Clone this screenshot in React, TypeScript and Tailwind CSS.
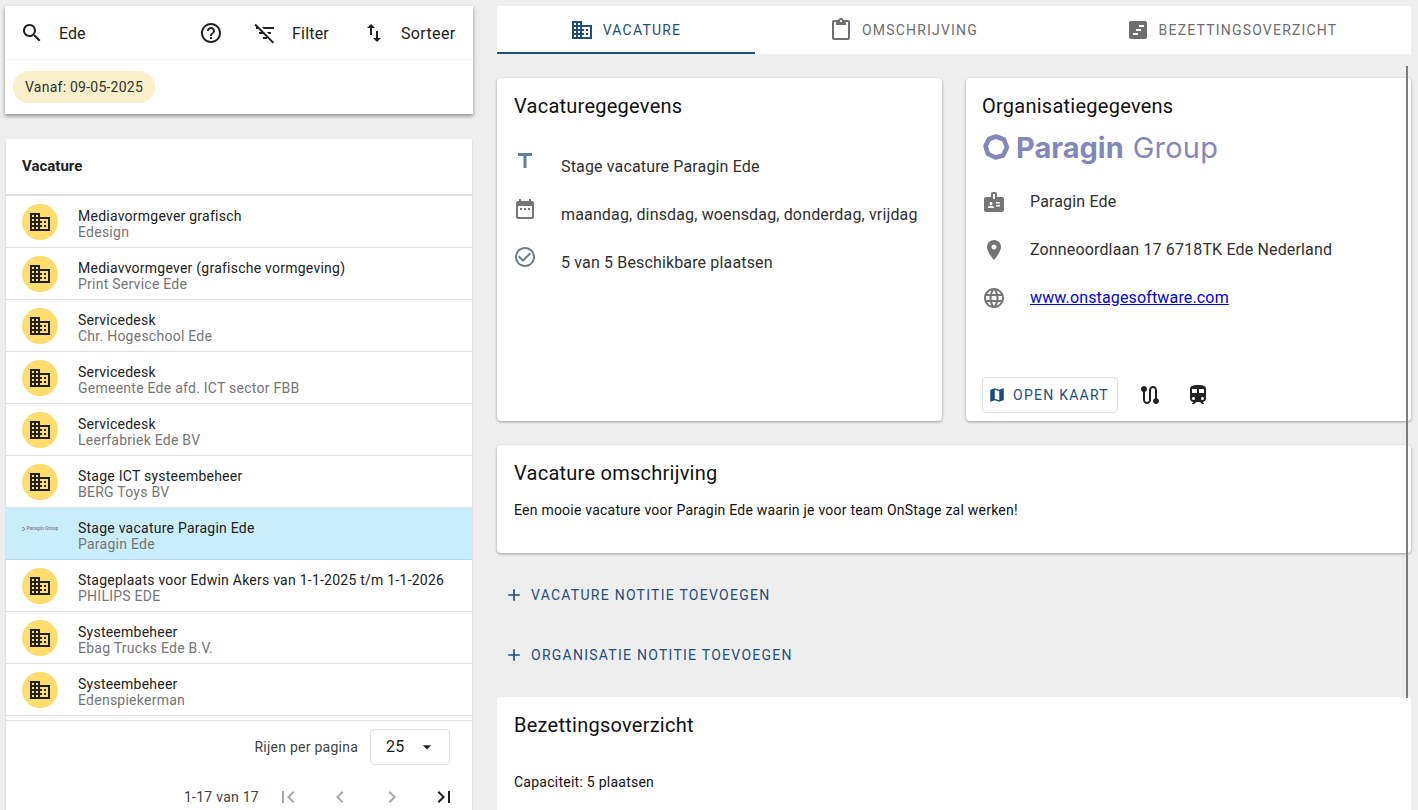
import React from "react";

const paths = {
  search: "M15.5 14h-.79l-.28-.27C15.41 12.59 16 11.11 16 9.5 16 5.91 13.09 3 9.5 3S3 5.91 3 9.5 5.91 16 9.5 16c1.61 0 3.09-.59 4.23-1.57l.27.28v.79l5 4.99L20.49 19l-4.99-5zm-6 0C7.01 14 5 11.99 5 9.5S7.01 5 9.5 5 14 7.01 14 9.5 11.99 14 9.5 14z",
  help: "M11 18h2v-2h-2v2zm1-16C6.48 2 2 6.48 2 12s4.48 10 10 10 10-4.48 10-10S17.52 2 12 2zm0 18c-4.41 0-8-3.59-8-8s3.59-8 8-8 8 3.59 8 8-3.59 8-8 8zm0-14c-2.21 0-4 1.79-4 4h2c0-1.1.9-2 2-2s2 .9 2 2c0 2-3 1.75-3 5h2c0-2.25 3-2.5 3-5 0-2.21-1.79-4-4-4z",
  filterOff: "M10.83 8H21V6H8.83l2 2zm5 5H18v-2h-4.17l2 2zM14 16.83V18h-4v-2h3.17l-3-3H6v-2h2.17l-3-3H3V6h.17L1.39 4.22 2.8 2.81l18.38 18.38-1.41 1.41L14 16.83z",
  swap: "M16 17.01V10h-2v7.01h-3L15 21l4-3.99h-3zM9 3L5 6.99h3V14h2V6.99h3L9 3z",
  domain: "M12 7V3H2v18h20V7H12zM6 19H4v-2h2v2zm0-4H4v-2h2v2zm0-4H4V9h2v2zm0-4H4V5h2v2zm4 12H8v-2h2v2zm0-4H8v-2h2v2zm0-4H8V9h2v2zm0-4H8V5h2v2zm10 12h-8v-2h2v-2h-2v-2h2v-2h-2V9h8v10zm-2-8h-2v2h2v-2zm0 4h-2v2h2v-2z",
  paste: "M19 2h-4.18C14.4.84 13.3 0 12 0c-1.3 0-2.4.84-2.82 2H5c-1.1 0-2 .9-2 2v16c0 1.1.9 2 2 2h14c1.1 0 2-.9 2-2V4c0-1.1-.9-2-2-2zm-7 0c.55 0 1 .45 1 1s-.45 1-1 1-1-.45-1-1 .45-1 1-1zm7 18H5V4h2v3h10V4h2v16z",
  title: "M5 4v3h5.5v12h3V7H19V4z",
  calendar: "M19 4h-1V2h-2v2H8V2H6v2H5c-1.11 0-1.99.9-1.99 2L3 20c0 1.1.89 2 2 2h14c1.1 0 2-.9 2-2V6c0-1.1-.9-2-2-2zm0 16H5V9h14v11zM9 11H7v2h2v-2zm4 0h-2v2h2v-2zm4 0h-2v2h2v-2z",
  check: "M16.59 7.58L10 14.17l-3.59-3.58L5 12l5 5 8-8zM12 2C6.48 2 2 6.48 2 12s4.48 10 10 10 10-4.48 10-10S17.52 2 12 2zm0 18c-4.42 0-8-3.58-8-8s3.58-8 8-8 8 3.58 8 8-3.58 8-8 8z",
  badge: "M20 7h-5V4c0-1.1-.9-2-2-2h-2c-1.1 0-2 .9-2 2v3H4c-1.1 0-2 .9-2 2v11c0 1.1.9 2 2 2h16c1.1 0 2-.9 2-2V9c0-1.1-.9-2-2-2zM9 12c.83 0 1.5.67 1.5 1.5S9.83 15 9 15s-1.5-.67-1.5-1.5S8.17 12 9 12zm3 6H6v-.75c0-1 2-1.5 3-1.5s3 .5 3 1.5V18zm1-9h-2V4h2v5zm5 7.5h-4V15h4v1.5zm0-3h-4V12h4v1.5z",
  place: "M12 2C8.13 2 5 5.13 5 9c0 5.25 7 13 7 13s7-7.75 7-13c0-3.87-3.13-7-7-7zm0 9.5c-1.38 0-2.5-1.12-2.5-2.5s1.12-2.5 2.5-2.5 2.5 1.12 2.5 2.5-1.12 2.5-2.5 2.5z",
  web: "M11.99 2C6.47 2 2 6.48 2 12s4.47 10 9.99 10C17.52 22 22 17.52 22 12S17.52 2 11.99 2zm6.93 6h-2.95c-.32-1.25-.78-2.45-1.38-3.56 1.84.63 3.37 1.91 4.33 3.56zM12 4.04c.83 1.2 1.48 2.53 1.91 3.96h-3.82c.43-1.43 1.08-2.76 1.91-3.96zM4.26 14C4.1 13.36 4 12.69 4 12s.1-1.36.26-2h3.38c-.08.66-.14 1.32-.14 2 0 .68.06 1.34.14 2H4.26zm.82 2h2.95c.32 1.25.78 2.45 1.38 3.56-1.84-.63-3.37-1.9-4.33-3.56zm2.95-8H5.08c.96-1.66 2.49-2.93 4.33-3.56C8.81 5.55 8.35 6.75 8.03 8zM12 19.96c-.83-1.2-1.48-2.53-1.91-3.96h3.82c-.43 1.43-1.08 2.76-1.91 3.96zM14.34 14H9.66c-.09-.66-.16-1.32-.16-2 0-.68.07-1.35.16-2h4.68c.09.65.16 1.32.16 2 0 .68-.07 1.34-.16 2zm.25 5.56c.6-1.11 1.06-2.31 1.38-3.56h2.95c-.96 1.65-2.49 2.93-4.33 3.56zM16.36 14c.08-.66.14-1.32.14-2 0-.68-.06-1.34-.14-2h3.38c.16.64.26 1.31.26 2s-.1 1.36-.26 2h-3.38z",
  map: "M20.5 3l-.16.03L15 5.1 9 3 3.36 4.9c-.21.07-.36.25-.36.48V20.5c0 .28.22.5.5.5l.16-.03L9 18.9l6 2.1 5.64-1.9c.21-.07.36-.25.36-.48V3.5c0-.28-.22-.5-.5-.5zM15 19l-6-2.11V5l6 2.11V19z",
  route: "M19 15.18V7c0-2.21-1.79-4-4-4s-4 1.79-4 4v10c0 1.1-.9 2-2 2s-2-.9-2-2V8.82C8.16 8.4 9 7.3 9 6c0-1.66-1.34-3-3-3S3 4.34 3 6c0 1.3.84 2.4 2 2.82V17c0 2.21 1.79 4 4 4s4-1.79 4-4V7c0-1.1.9-2 2-2s2 .9 2 2v8.18c-1.16.41-2 1.51-2 2.82 0 1.66 1.34 3 3 3s3-1.34 3-3c0-1.3-.84-2.4-2-2.82z",
  train: "M12 2c-4 0-8 .5-8 4v9.5C4 17.43 5.57 19 7.5 19L6 20.5v.5h2.23l2-2H14l2 2h2v-.5L16.5 19c1.93 0 3.5-1.57 3.5-3.5V6c0-3.5-3.58-4-8-4zM7.5 17c-.83 0-1.5-.67-1.5-1.5S6.67 14 7.5 14s1.5.67 1.5 1.5S8.33 17 7.5 17zm3.5-7H6V6h5v4zm2 0V6h5v4h-5zm3.5 7c-.83 0-1.5-.67-1.5-1.5s.67-1.5 1.5-1.5 1.5.67 1.5 1.5-.67 1.5-1.5 1.5z",
  add: "M19 13h-6v6h-2v-6H5v-2h6V5h2v6h6v2z",
  first: "M18.41 16.59L13.82 12l4.59-4.59L17 6l-6 6 6 6zM6 6h2v12H6z",
  prev: "M15.41 7.41L14 6l-6 6 6 6 1.41-1.41L10.83 12z",
  next: "M10 6L8.59 7.41 13.17 12l-4.58 4.59L10 18l6-6z",
  last: "M5.59 7.41L10.18 12l-4.59 4.59L7 18l6-6-6-6zM16 6h2v12h-2z",
  drop: "M7 10l5 5 5-5z",
  chart: "M19 3H5c-1.1 0-2 .9-2 2v14c0 1.1.9 2 2 2h14c1.1 0 2-.9 2-2V5c0-1.1-.9-2-2-2zM7 17v-2h5v2H7zm3-4v-2h5v2h-5zm3-4V7h5v2h-5z",
};

function Icon({ d, className }: { d: string; className?: string }) {
  return (
    <svg viewBox="0 0 24 24" fill="currentColor" className={`shrink-0 ${className ?? ""}`}>
      <path d={d} />
    </svg>
  );
}

function ParaginLogo() {
  return (
    <div className="mt-[9px] flex h-[32px] items-center font-['Inter',sans-serif] text-[#8387b9]">
      <svg viewBox="0 0 28 28" className="h-[28px] w-[28px] shrink-0">
        <path
          d="M14 3.5 L22 6.5 L25 14.5 L21 22.5 L13.5 24.5 L6 21 L3.5 13 L7 6 Z"
          fill="none"
          stroke="currentColor"
          strokeWidth="4.6"
          strokeLinejoin="round"
        />
      </svg>
      <span className="ml-[6px] text-[29px] leading-none font-bold">Paragin</span>
      <span className="ml-[9px] text-[29px] leading-none font-normal tracking-[0.2px]">Group</span>
    </div>
  );
}

const rows = [
  ["Mediavormgever grafisch", "Edesign"],
  ["Mediavvormgever (grafische vormgeving)", "Print Service Ede"],
  ["Servicedesk", "Chr. Hogeschool Ede"],
  ["Servicedesk", "Gemeente Ede afd. ICT sector FBB"],
  ["Servicedesk", "Leerfabriek Ede BV"],
  ["Stage ICT systeembeheer", "BERG Toys BV"],
  ["Stage vacature Paragin Ede", "Paragin Ede"],
  ["Stageplaats voor Edwin Akers van 1-1-2025 t/m 1-1-2026", "PHILIPS EDE"],
  ["Systeembeheer", "Ebag Trucks Ede B.V."],
  ["Systeembeheer", "Edenspiekerman"],
];

function Row({ title, sub }: { title: string; sub: string }) {
  const selected = title === "Stage vacature Paragin Ede";
  return (
    <div
      className={`flex h-[52px] items-center border-b pl-[16px] ${
        selected ? "border-[#b5dbe9] bg-[#c9eefb]" : "border-[#e0e0e0]"
      }`}
    >
      {selected ? (
        <div className="mb-[10px] flex h-[36px] w-[36px] items-center justify-center overflow-hidden text-[#8a8da8]">
          <svg viewBox="0 0 4 4" className="mr-[1px] h-[4px] w-[4px] shrink-0">
            <circle cx="2" cy="2" r="1.5" fill="none" stroke="currentColor" />
          </svg>
          <span className="text-[5px] leading-none font-bold whitespace-nowrap">Paragin Group</span>
        </div>
      ) : (
        <div className="flex h-[36px] w-[36px] items-center justify-center rounded-full bg-[#ffdd6e] text-[#212121]">
          <Icon d={paths.domain} className="h-[24px] w-[24px]" />
        </div>
      )}
      <div className="ml-[20px] pt-[5px]">
        <div className="text-[14px] leading-[16px] tracking-[0.24px] text-[#212121]">{title}</div>
        <div className="text-[14px] leading-[16px] tracking-[0.25px] text-[#757575]">{sub}</div>
      </div>
    </div>
  );
}

function LeftColumn() {
  return (
    <div className="flex w-[468px] shrink-0 flex-col pt-[6px]">
      <div className="h-[108px] bg-white shadow-[0_2px_4px_rgba(0,0,0,0.4)]">
        <div className="flex h-[54px] items-center border-b border-[#f6f6f6] text-[16px] text-[#212121]">
          <Icon d={paths.search} className="ml-[15px] h-[24px] w-[24px]" />
          <span className="ml-[15px] w-[140px] pt-[3px]">Ede</span>
          <Icon d={paths.help} className="h-[24px] w-[24px]" />
          <Icon d={paths.filterOff} className="ml-[30px] h-[24px] w-[24px]" />
          <span className="ml-[15px] w-[38px] pt-[2px] tracking-[0.2px]">Filter</span>
          <Icon d={paths.swap} className="ml-[32px] h-[24px] w-[24px]" />
          <span className="ml-[15px] pt-[2px] tracking-[0.35px]">Sorteer</span>
        </div>
        <div className="pt-[11px] pl-[8px]">
          <span className="inline-flex h-[32px] items-center rounded-full bg-[#f8f0c9] px-[12px] text-[14px] tracking-[0.24px] text-[#303030]">
            Vanaf: 09-05-2025
          </span>
        </div>
      </div>

      <div className="mx-[1px] mt-[25px] flex min-h-0 flex-1 flex-col bg-white shadow-[0_1px_2px_rgba(0,0,0,0.15)]">
        <div className="flex h-[57px] shrink-0 items-center border-b-2 border-[#e0e0e0] pl-[16px] text-[15px] font-bold text-[#212121]">
          Vacature
        </div>
        <div className="h-[524px] shrink-0 overflow-hidden">
          {rows.map((r, i) => (
            <Row key={i} title={r[0]} sub={r[1]} />
          ))}
        </div>
        <div className="flex-1 border-t border-[#e0e0e0] text-[14px] tracking-[0.25px] text-[#424242]">
          <div className="mt-[8px] flex items-center justify-end pr-[22px]">
            <span className="mr-[12px]">Rijen per pagina</span>
            <div className="flex h-[36px] w-[80px] items-center rounded-[4px] border border-[#e0e0e0] pl-[15px] text-[16px] text-[#212121]">
              25
              <Icon d={paths.drop} className="ml-[13px] h-[20px] w-[20px]" />
            </div>
          </div>
          <div className="mt-[20px] flex items-center pl-[178px]">
            <span className="w-[92px]">1-17 van 17</span>
            <Icon d={paths.first} className="h-[24px] w-[24px] text-[#a8a8a8]" />
            <Icon d={paths.prev} className="ml-[28px] h-[24px] w-[24px] text-[#a8a8a8]" />
            <Icon d={paths.next} className="ml-[28px] h-[24px] w-[24px] text-[#a8a8a8]" />
            <Icon d={paths.last} className="ml-[28px] h-[24px] w-[24px] text-[#212121]" />
          </div>
        </div>
      </div>
    </div>
  );
}

function Tab({
  icon,
  label,
  active,
  className,
}: {
  icon: string;
  label: string;
  active?: boolean;
  className: string;
}) {
  return (
    <div
      className={`flex h-[48px] items-center justify-center gap-[9px] border-b-2 pt-[2px] pr-[1px] text-[14px] tracking-[1.2px] uppercase ${className} ${
        active ? "border-[#1f4e79] text-[#1f4e79]" : "border-transparent text-[#6e6e6e]"
      }`}
    >
      <Icon d={icon} className="h-[24px] w-[24px]" />
      <span>{label}</span>
    </div>
  );
}

function InfoRow({ icon, children }: { icon: string; children: React.ReactNode }) {
  return (
    <div className="flex h-[48px] items-center text-[16px] tracking-[0.15px] text-[#303030]">
      <Icon d={icon} className="h-[24px] w-[24px] text-[#757575]" />
      <div className="ml-[24px]">{children}</div>
    </div>
  );
}

function DetailRow({ icon, color, children }: { icon: string; color: string; children: React.ReactNode }) {
  return (
    <div className="flex h-[48px] items-start text-[16px] tracking-[0.15px] text-[#303030]">
      <Icon d={icon} className={`-ml-[1px] h-[24px] w-[24px] ${color}`} />
      <div className="mt-[6px] ml-[24px]">{children}</div>
    </div>
  );
}

function CardTitle({ children }: { children: React.ReactNode }) {
  return <h2 className="text-[20px] leading-[32px] tracking-[0.25px] font-normal text-[#111]">{children}</h2>;
}

function NoteButton({ label }: { label: string }) {
  return (
    <div className="flex h-[36px] items-center pl-[5px] text-[14px] tracking-[1.26px] text-[#1f4e79] uppercase">
      <Icon d={paths.add} className="h-[24px] w-[24px] scale-[0.83]" />
      <span className="ml-[5px]">{label}</span>
    </div>
  );
}

function RightColumn() {
  return (
    <div className="relative flex w-[914px] shrink-0 flex-col pt-[6px]">
      <div className="flex bg-white">
        <Tab icon={paths.domain} label="Vacature" active className="w-[258px]" />
        <Tab icon={paths.paste} label="Omschrijving" className="w-[298px]" />
        <Tab icon={paths.chart} label="Bezettingsoverzicht" className="flex-1" />
      </div>

      <div className="mt-[24px] flex gap-[24px]">
        <div className="h-[343px] w-[445px] rounded-[4px] bg-white px-[17px] pt-[12px] shadow-[0_1px_3px_rgba(0,0,0,0.35)]">
          <CardTitle>Vacaturegegevens</CardTitle>
          <div className="mt-[27px]">
            <DetailRow icon={paths.title} color="text-[#5f7f9f]">Stage vacature Paragin Ede</DetailRow>
            <DetailRow icon={paths.calendar} color="text-[#757575]">maandag, dinsdag, woensdag, donderdag, vrijdag</DetailRow>
            <DetailRow icon={paths.check} color="text-[#6b7b8b]">5 van 5 Beschikbare plaatsen</DetailRow>
          </div>
        </div>

        <div className="flex h-[343px] w-[445px] flex-col rounded-[4px] bg-white px-[16px] pt-[12px] shadow-[0_1px_3px_rgba(0,0,0,0.35)]">
          <CardTitle>Organisatiegegevens</CardTitle>
          <ParaginLogo />
          <div className="mt-[15px]">
            <InfoRow icon={paths.badge}>Paragin Ede</InfoRow>
            <InfoRow icon={paths.place}>Zonneoordlaan 17 6718TK Ede Nederland</InfoRow>
            <InfoRow icon={paths.web}>
              <a href="#" className="text-[#0000ee] underline">
                www.onstagesoftware.com
              </a>
            </InfoRow>
          </div>
          <div className="mt-[55px] flex items-center">
            <div className="flex h-[36px] w-[136px] items-center rounded-[4px] border border-[#e0e0e0] pl-[5px] text-[14px] tracking-[1.26px] text-[#1f4e79] uppercase">
              <Icon d={paths.map} className="h-[18px] w-[18px]" />
              <span className="ml-[7px]">Open kaart</span>
            </div>
            <Icon d={paths.route} className="ml-[20px] h-[24px] w-[24px] text-[#212121]" />
            <Icon d={paths.train} className="ml-[24px] h-[24px] w-[24px] text-[#212121]" />
          </div>
        </div>
      </div>

      <div className="mt-[24px] h-[108px] rounded-[4px] bg-white px-[17px] pt-[12px] shadow-[0_1px_3px_rgba(0,0,0,0.35)]">
        <CardTitle>Vacature omschrijving</CardTitle>
        <p className="mt-[11px] text-[14px] leading-[20px] tracking-[0.23px] text-[#111]">
          Een mooie vacature voor Paragin Ede waarin je voor team OnStage zal werken!
        </p>
      </div>

      <div className="mt-[24px] flex flex-col gap-[24px]">
        <NoteButton label="Vacature notitie toevoegen" />
        <NoteButton label="Organisatie notitie toevoegen" />
      </div>

      <div className="mt-[24px] flex-1 rounded-t-[4px] bg-white px-[17px] pt-[12px]">
        <CardTitle>Bezettingsoverzicht</CardTitle>
        <p className="mt-[31px] text-[14px] leading-[20px] tracking-[0.25px] text-[#111]">Capaciteit: 5 plaatsen</p>
      </div>

      <div className="absolute top-[66px] right-[3px] h-[632px] w-[2px] bg-[#7c7c7c]" />
    </div>
  );
}

export default function App() {
  return (
    <div className="flex h-[810px] gap-[24px] overflow-hidden bg-[#eeeeee] pl-[5px] font-['Roboto',sans-serif]">
      <LeftColumn />
      <RightColumn />
    </div>
  );
}
